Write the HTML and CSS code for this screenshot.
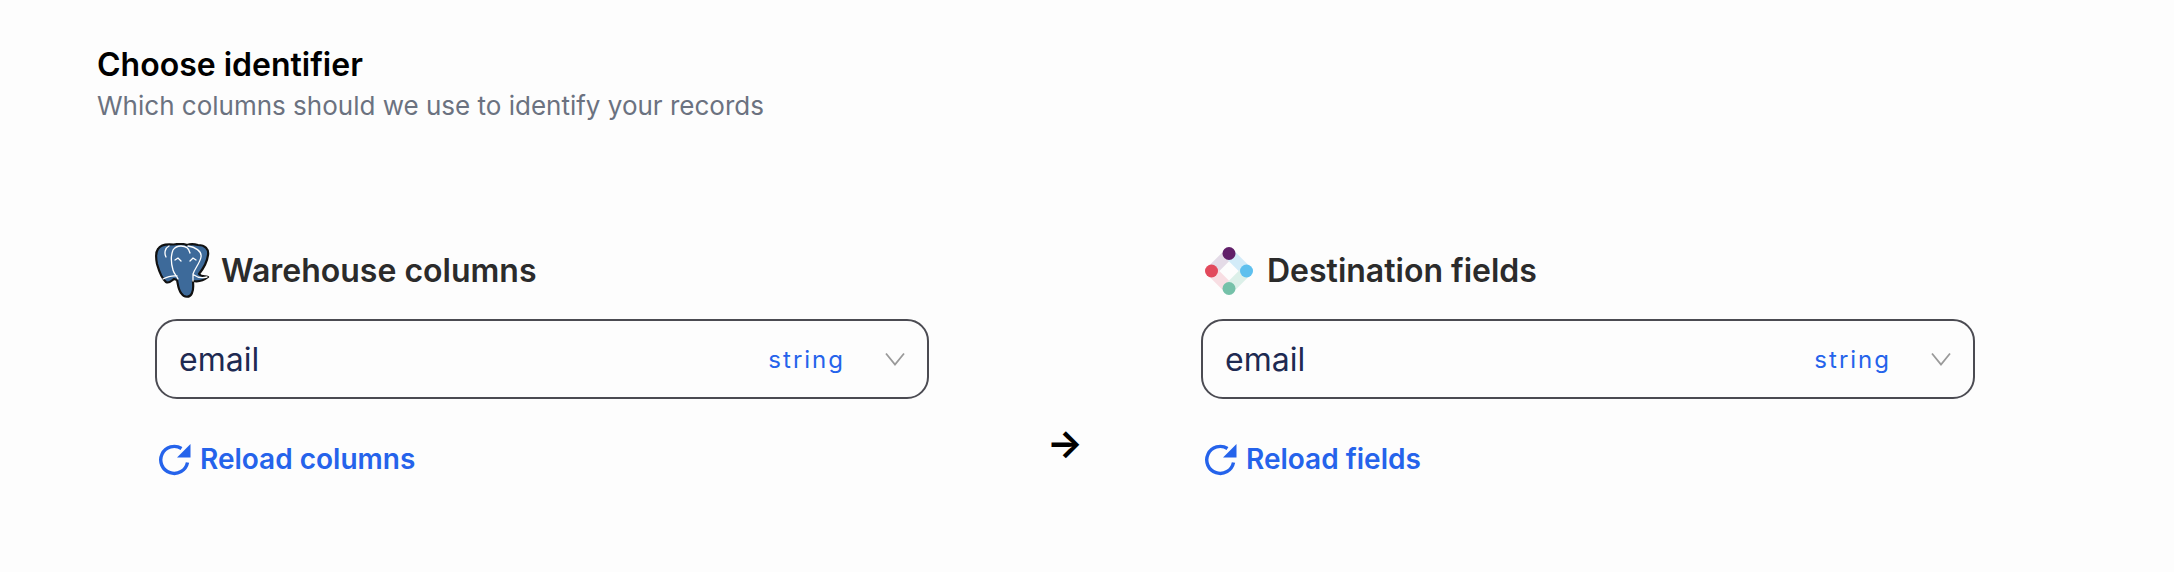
FILE: index.html
```html
<!DOCTYPE html>
<html lang="en">

<head>
    <meta charset="UTF-8">
    <title>Choose identifier</title>
    <link rel="stylesheet" href="styles.css">
</head>

<body>
    <header class="intro">
        <h1>Choose identifier</h1>
        <p>Which columns should we use to identify your records</p>
    </header>

    <section class="mapping">
        <div class="column">
            <div class="column-title">
                <svg class="logo" width="56" height="56" viewBox="0 0 56 56">
                    <path d="M18 1.500C13 1 6 1 3 6C0 10 1 16 2 21C4 28 7 36 11 39C14 41 16 38 19 36L22 37C23 41 23 46 26 50C29 55 35 55 37 50C39 46 38 42 38 38C43 39 48 38 53 34C50 33 46 34 44 31C48 26 52 20 53 12C54 6 50 2 43 2C39 1 35 1 32 2C28 0 23 1 18 1.500Z" fill="#3d6a9a" stroke="#111" stroke-width="2.200" stroke-linejoin="round"/>
                    <path d="M18 7C16 12 16 20 18 27C19 31 22 33 23 36M18 7C20 4 23 3 26 3C30 3 34 5 35 10M33 3C40 4 47 8 46 14C45 20 40 25 38 31L38 38M8 36C12 34 16 32 22 33M39 32C43 35 48 35 52 34M20 17l3-2 3 3M41 17l-3-2-3 3M14 3C10 5 9 10 11 14" fill="none" stroke="#fff" stroke-width="1.300" stroke-linecap="round"/>
                </svg>
                <h2>Warehouse columns</h2>
            </div>
            <div class="select">
                <span class="select-value">email</span>
                <span class="select-type">string</span>
                <svg class="chevron" width="20" height="14" viewBox="0 0 20 14"><path d="M1 1.500l9 11 9-11" fill="none" stroke="#9a9a9a" stroke-width="1.800"/></svg>
            </div>
            <a class="reload" href="#">
                <svg width="34" height="34" viewBox="0 0 34 34"><path d="M29.500 20.500A13.500 13.500 0 1 1 23.500 6.500" fill="none" stroke="#2563eb" stroke-width="3.400"/><path d="M32.500 2v13.500H19z" fill="#2563eb"/></svg>
                Reload columns
            </a>
        </div>

        <div class="arrow">→</div>

        <div class="column">
            <div class="column-title">
                <svg class="logo" width="56" height="56" viewBox="0 0 56 56">
                    <g stroke-width="11">
                        <path d="M28 10.500L10.500 28" stroke="#e4dbe7"/>
                        <path d="M28 10.500L45.500 28" stroke="#d2ebf8"/>
                        <path d="M10.500 28L28 45.500" stroke="#f8dee3"/>
                        <path d="M45.500 28L28 45.500" stroke="#dcf0e9"/>
                    </g>
                    <circle cx="28" cy="10.500" r="6.500" fill="#611f69"/>
                    <circle cx="10.500" cy="28" r="6.500" fill="#e2495c"/>
                    <circle cx="45.500" cy="28" r="6.500" fill="#5ec0ee"/>
                    <circle cx="28" cy="45.500" r="6.500" fill="#75c1a9"/>
                </svg>
                <h2>Destination fields</h2>
            </div>
            <div class="select">
                <span class="select-value">email</span>
                <span class="select-type">string</span>
                <svg class="chevron" width="20" height="14" viewBox="0 0 20 14"><path d="M1 1.500l9 11 9-11" fill="none" stroke="#9a9a9a" stroke-width="1.800"/></svg>
            </div>
            <a class="reload" href="#">
                <svg width="34" height="34" viewBox="0 0 34 34"><path d="M29.500 20.500A13.500 13.500 0 1 1 23.500 6.500" fill="none" stroke="#2563eb" stroke-width="3.400"/><path d="M32.500 2v13.500H19z" fill="#2563eb"/></svg>
                Reload fields
            </a>
        </div>
    </section>
</body>

</html>
```

FILE: styles.css
```css
html, body {
    margin: 0;
    height: 100%;
}

body {
    background-color: #fdfdfd;
    padding: 46px 97px 0;
    box-sizing: border-box;
    font-family: Inter, "Liberation Sans", sans-serif;
}

h1 {
    margin: 0;
    font-size: 32px;
    line-height: 38px;
    font-weight: 600;
    color: #000;
}

.intro p {
    margin: 6px 0 0;
    font-size: 26px;
    line-height: 32px;
    color: #6b7280;
}

.mapping {
    display: flex;
    margin-top: 120px;
    padding-left: 58px;
}

.column {
    width: 774px;
}

.column-title {
    display: flex;
    align-items: center;
    gap: 10px;
    height: 56px;
}

.logo {
    margin-top: 2px;
}

h2 {
    margin: 0;
    font-size: 32px;
    font-weight: 600;
    color: #2b2b2b;
}

.select {
    display: flex;
    align-items: center;
    height: 80px;
    box-sizing: border-box;
    margin-top: 21px;
    padding: 0 22px 0 22px;
    border: 2px solid #4b4b52;
    border-radius: 22px;
}

.select-value {
    flex: 1;
    font-size: 32px;
    color: #1e2a52;
}

.select-type {
    font-size: 24px;
    letter-spacing: 2px;
    color: #2563eb;
    margin-right: 40px;
}

.reload {
    display: flex;
    align-items: center;
    gap: 8px;
    margin-top: 43px;
    margin-left: 3px;
    font-size: 28px;
    font-weight: 600;
    color: #2563eb;
    text-decoration: none;
}

.arrow {
    width: 272px;
    text-align: center;
    font-size: 38px;
    font-weight: 700;
    color: #000;
    padding-top: 178px;
    box-sizing: border-box;
}
```
